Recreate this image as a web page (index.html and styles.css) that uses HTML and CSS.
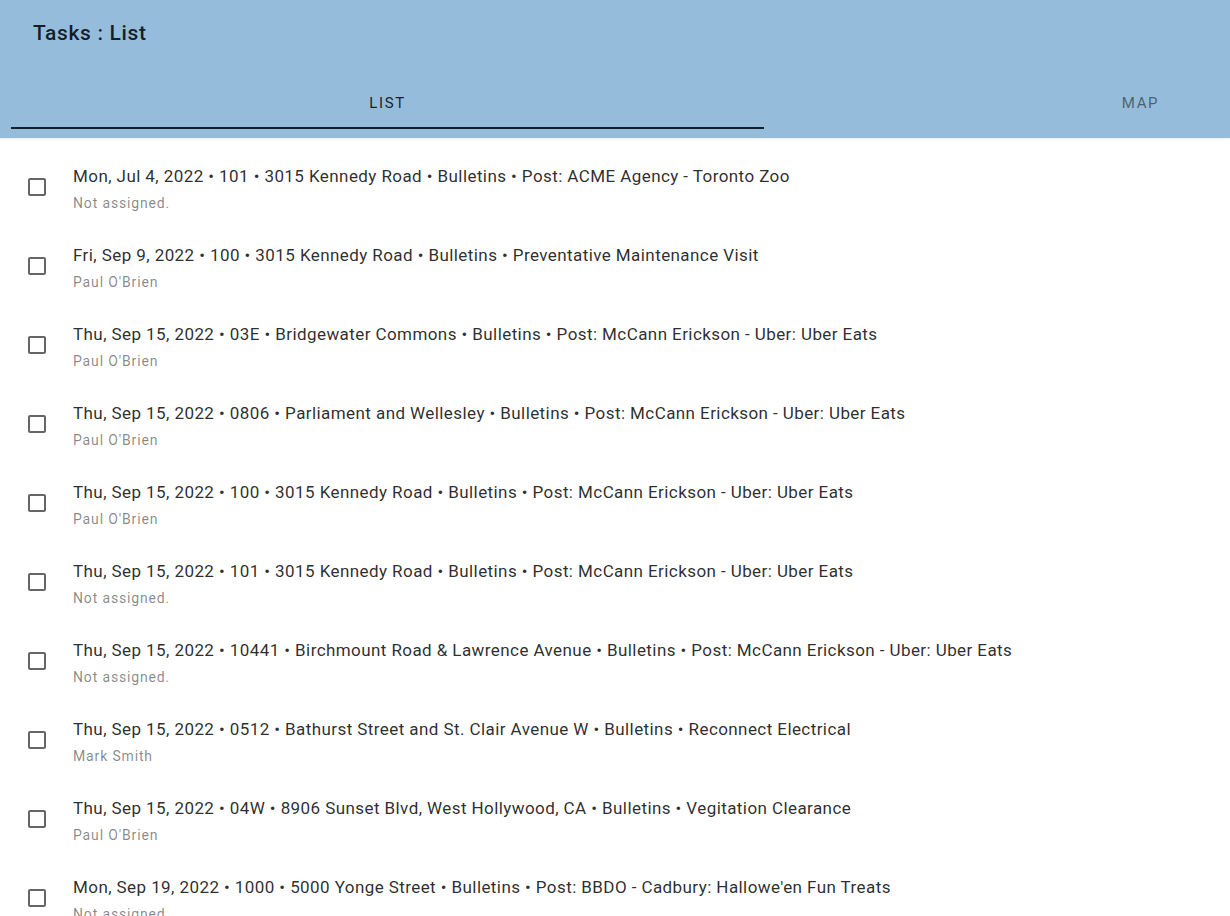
FILE: index.html
```
<!doctype html>
<html>

<head>
    <link rel="stylesheet" href="styles.css">
</head>

<body>

    <div class="appBar">
        <div class="toolbar">
            <span class="pageTitle">Tasks : List</span>
        </div>
        <div class="tabs">
            <div class="tab tabActive">List</div>
            <div class="tab">Map</div>
        </div>
    </div>

    <ul class="taskList">
        <li class="taskRow">
            <span class="checkWrap"><svg class="checkIcon" viewBox="0 0 24 24"><path d="M19 5v14H5V5h14m0-2H5c-1.1 0-2 .9-2 2v14c0 1.1.9 2 2 2h14c1.1 0 2-.9 2-2V5c0-1.1-.9-2-2-2z"/></svg></span>
            <div class="taskText">
                <div class="taskPrimary">Mon, Jul 4, 2022 • 101 • 3015 Kennedy Road • Bulletins • Post: ACME Agency - Toronto Zoo</div>
                <div class="taskSecondary">Not assigned.</div>
            </div>
        </li>
        <li class="taskRow">
            <span class="checkWrap"><svg class="checkIcon" viewBox="0 0 24 24"><path d="M19 5v14H5V5h14m0-2H5c-1.1 0-2 .9-2 2v14c0 1.1.9 2 2 2h14c1.1 0 2-.9 2-2V5c0-1.1-.9-2-2-2z"/></svg></span>
            <div class="taskText">
                <div class="taskPrimary">Fri, Sep 9, 2022 • 100 • 3015 Kennedy Road • Bulletins • Preventative Maintenance Visit</div>
                <div class="taskSecondary">Paul O'Brien</div>
            </div>
        </li>
        <li class="taskRow">
            <span class="checkWrap"><svg class="checkIcon" viewBox="0 0 24 24"><path d="M19 5v14H5V5h14m0-2H5c-1.1 0-2 .9-2 2v14c0 1.1.9 2 2 2h14c1.1 0 2-.9 2-2V5c0-1.1-.9-2-2-2z"/></svg></span>
            <div class="taskText">
                <div class="taskPrimary">Thu, Sep 15, 2022 • 03E • Bridgewater Commons • Bulletins • Post: McCann Erickson - Uber: Uber Eats</div>
                <div class="taskSecondary">Paul O'Brien</div>
            </div>
        </li>
        <li class="taskRow">
            <span class="checkWrap"><svg class="checkIcon" viewBox="0 0 24 24"><path d="M19 5v14H5V5h14m0-2H5c-1.1 0-2 .9-2 2v14c0 1.1.9 2 2 2h14c1.1 0 2-.9 2-2V5c0-1.1-.9-2-2-2z"/></svg></span>
            <div class="taskText">
                <div class="taskPrimary">Thu, Sep 15, 2022 • 0806 • Parliament and Wellesley • Bulletins • Post: McCann Erickson - Uber: Uber Eats</div>
                <div class="taskSecondary">Paul O'Brien</div>
            </div>
        </li>
        <li class="taskRow">
            <span class="checkWrap"><svg class="checkIcon" viewBox="0 0 24 24"><path d="M19 5v14H5V5h14m0-2H5c-1.1 0-2 .9-2 2v14c0 1.1.9 2 2 2h14c1.1 0 2-.9 2-2V5c0-1.1-.9-2-2-2z"/></svg></span>
            <div class="taskText">
                <div class="taskPrimary">Thu, Sep 15, 2022 • 100 • 3015 Kennedy Road • Bulletins • Post: McCann Erickson - Uber: Uber Eats</div>
                <div class="taskSecondary">Paul O'Brien</div>
            </div>
        </li>
        <li class="taskRow">
            <span class="checkWrap"><svg class="checkIcon" viewBox="0 0 24 24"><path d="M19 5v14H5V5h14m0-2H5c-1.1 0-2 .9-2 2v14c0 1.1.9 2 2 2h14c1.1 0 2-.9 2-2V5c0-1.1-.9-2-2-2z"/></svg></span>
            <div class="taskText">
                <div class="taskPrimary">Thu, Sep 15, 2022 • 101 • 3015 Kennedy Road • Bulletins • Post: McCann Erickson - Uber: Uber Eats</div>
                <div class="taskSecondary">Not assigned.</div>
            </div>
        </li>
        <li class="taskRow">
            <span class="checkWrap"><svg class="checkIcon" viewBox="0 0 24 24"><path d="M19 5v14H5V5h14m0-2H5c-1.1 0-2 .9-2 2v14c0 1.1.9 2 2 2h14c1.1 0 2-.9 2-2V5c0-1.1-.9-2-2-2z"/></svg></span>
            <div class="taskText">
                <div class="taskPrimary">Thu, Sep 15, 2022 • 10441 • Birchmount Road &amp; Lawrence Avenue • Bulletins • Post: McCann Erickson - Uber: Uber Eats</div>
                <div class="taskSecondary">Not assigned.</div>
            </div>
        </li>
        <li class="taskRow">
            <span class="checkWrap"><svg class="checkIcon" viewBox="0 0 24 24"><path d="M19 5v14H5V5h14m0-2H5c-1.1 0-2 .9-2 2v14c0 1.1.9 2 2 2h14c1.1 0 2-.9 2-2V5c0-1.1-.9-2-2-2z"/></svg></span>
            <div class="taskText">
                <div class="taskPrimary">Thu, Sep 15, 2022 • 0512 • Bathurst Street and St. Clair Avenue W • Bulletins • Reconnect Electrical</div>
                <div class="taskSecondary">Mark Smith</div>
            </div>
        </li>
        <li class="taskRow">
            <span class="checkWrap"><svg class="checkIcon" viewBox="0 0 24 24"><path d="M19 5v14H5V5h14m0-2H5c-1.1 0-2 .9-2 2v14c0 1.1.9 2 2 2h14c1.1 0 2-.9 2-2V5c0-1.1-.9-2-2-2z"/></svg></span>
            <div class="taskText">
                <div class="taskPrimary">Thu, Sep 15, 2022 • 04W • 8906 Sunset Blvd, West Hollywood, CA • Bulletins • Vegitation Clearance</div>
                <div class="taskSecondary">Paul O'Brien</div>
            </div>
        </li>
        <li class="taskRow">
            <span class="checkWrap"><svg class="checkIcon" viewBox="0 0 24 24"><path d="M19 5v14H5V5h14m0-2H5c-1.1 0-2 .9-2 2v14c0 1.1.9 2 2 2h14c1.1 0 2-.9 2-2V5c0-1.1-.9-2-2-2z"/></svg></span>
            <div class="taskText">
                <div class="taskPrimary">Mon, Sep 19, 2022 • 1000 • 5000 Yonge Street • Bulletins • Post: BBDO - Cadbury: Hallowe'en Fun Treats</div>
                <div class="taskSecondary">Not assigned.</div>
            </div>
        </li>
    </ul>

</body>

</html>
```

FILE: styles.css
```
html, body {
    margin: 0;
    height: 100%;
    overflow: hidden;
}

body {
    font-family: Roboto, "Liberation Sans", sans-serif;
    background: #ffffff;
    color: rgba(0, 0, 0, 0.87);
}

.appBar {
    background: #95bcdb;
    height: 138px;
    overflow: hidden;
    box-shadow: 0 1px 2px rgba(0, 0, 0, 0.08);
}

.toolbar {
    height: 65px;
    padding-left: 33px;
    display: flex;
    align-items: center;
}

.pageTitle {
    font-size: 21px;
    font-weight: 500;
    letter-spacing: 0.65px;
    color: rgba(0, 0, 0, 0.85);
}

.tabs {
    display: flex;
    margin-top: 16px;
    padding-left: 11px;
    width: 1600px;
}

.tab {
    flex: 0 0 753px;
    height: 48px;
    display: flex;
    align-items: center;
    justify-content: center;
    font-size: 15px;
    font-weight: 400;
    letter-spacing: 1.6px;
    text-transform: uppercase;
    color: rgba(0, 0, 0, 0.5);
    box-sizing: border-box;
    padding-bottom: 4px;
}

.tabActive {
    color: rgba(0, 0, 0, 0.85);
    border-bottom: 2px solid #14212d;
    padding-bottom: 2px;
}

.taskList {
    list-style: none;
    margin: 0;
    padding: 11px 0 0 0;
}

.taskRow {
    display: flex;
    align-items: flex-start;
    padding: 9px 16px 9px 25px;
}

.checkWrap {
    width: 48px;
    flex-shrink: 0;
    padding-top: 17px;
}

.checkIcon {
    display: block;
    width: 24px;
    height: 24px;
    fill: rgba(0, 0, 0, 0.6);
}

.taskText {
    margin: 6px 0;
}

.taskPrimary {
    font-size: 17px;
    line-height: 24px;
    letter-spacing: 0.42px;
    color: rgba(0, 0, 0, 0.84);
}

.taskSecondary {
    font-size: 14px;
    line-height: 20px;
    letter-spacing: 0.85px;
    margin-top: 5px;
    color: rgba(0, 0, 0, 0.48);
}
```
